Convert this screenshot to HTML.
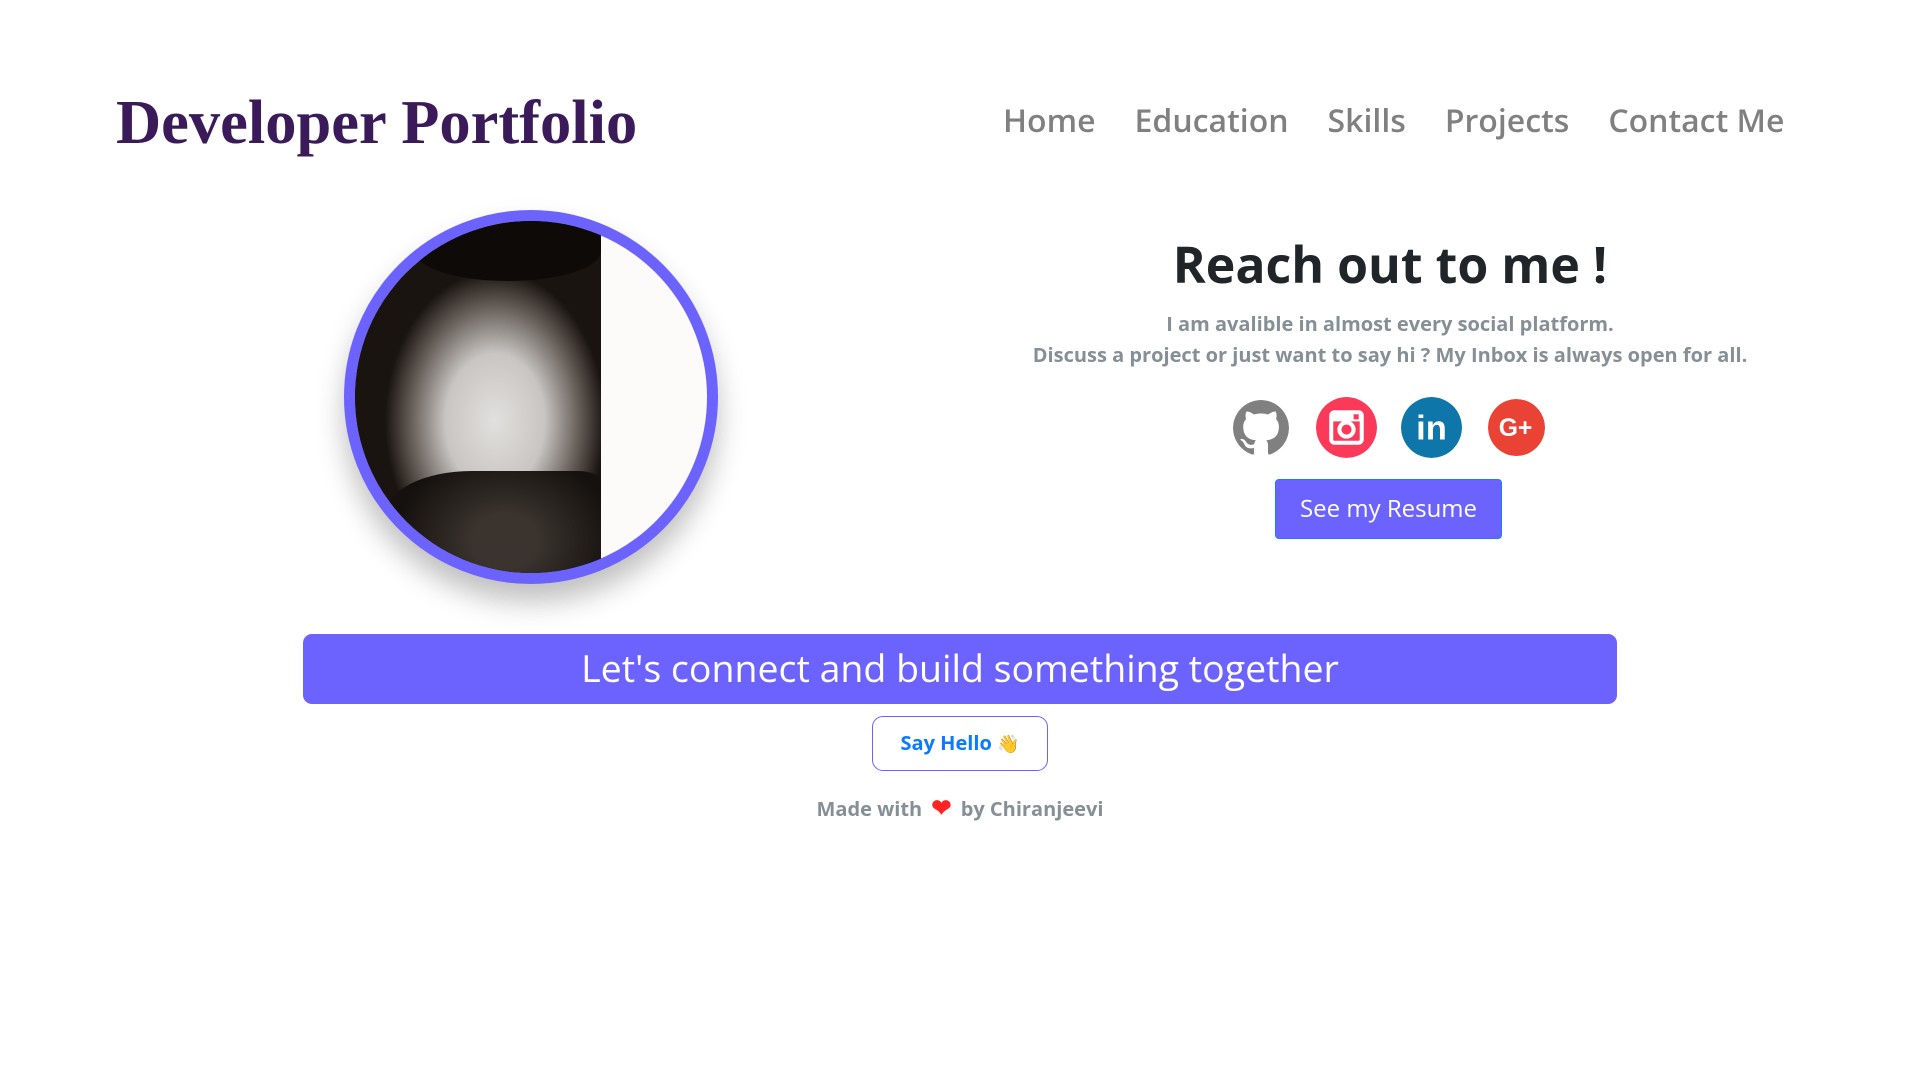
<!DOCTYPE html>
<html><head><meta charset="utf-8"><style>
*{margin:0;padding:0;box-sizing:border-box}
body{width:1920px;height:1080px;background:#fff;font-family:"Open Sans","Liberation Sans",sans-serif;position:relative;overflow:hidden}
.title{position:absolute;left:116px;top:86px;font-family:"Liberation Serif",serif;font-weight:bold;font-size:62.5px;color:#3b1a5a;white-space:nowrap}
.nav{position:absolute;top:99px;left:1003px;font-size:32px;font-weight:600;color:#808080;white-space:nowrap}
.nav span{margin-right:39px}
.avatar{position:absolute;left:344px;top:210px;width:374px;height:374px;border-radius:50%;border:11px solid #6c63ff;box-shadow:0 18px 28px rgba(0,0,0,.25);overflow:hidden;background:#fcfbfa}
.face{position:absolute;left:0;top:0;width:246px;height:100%;background:radial-gradient(ellipse 110px 150px at 140px 200px,#e2e0de 0%,#c8c5c2 45%,#6a625d 75%,#1a1410 100%),#1a1410}
.hair{position:absolute;left:60px;top:0;width:186px;height:60px;background:#0d0a08;border-radius:40% 20% 50% 50%}
.beard{position:absolute;left:30px;top:250px;width:216px;height:110px;background:radial-gradient(ellipse 110px 90px at 120px 70px,#3a332e 30%,#15110e 100%);border-radius:40% 10% 0 0}
.h1{position:absolute;left:1090px;width:600px;top:230px;text-align:center;font-size:50px;font-weight:bold;color:#212529}
.p{position:absolute;left:940px;width:900px;top:308px;text-align:center;font-size:20px;font-weight:bold;color:#868e96;line-height:31px}
.ic{position:absolute;top:398px;width:59px;height:59px;border-radius:50%}
.btn{position:absolute;left:1275px;top:479px;width:227px;height:60px;background:#6c63ff;border:1px solid #1e7bff;border-radius:4px;color:#fff;font-size:24px;text-align:center;line-height:58px}
.banner{position:absolute;left:303px;top:634px;width:1314px;height:70px;background:#6c63ff;border-radius:9px;color:#fff;font-size:37.5px;text-align:center;line-height:68px}
.hello{position:absolute;left:872px;top:716px;width:176px;height:55px;border:1.5px solid #6c63ff;border-radius:11px;color:#0a7bff;font-size:20px;font-weight:bold;text-align:center;line-height:52px}
.made{position:absolute;left:0;width:1920px;top:791px;text-align:center;font-size:20px;font-weight:bold;color:#868e96}
</style></head><body>
<div class="title">Developer Portfolio</div>
<div class="nav"><span>Home</span><span>Education</span><span>Skills</span><span>Projects</span><span style="margin:0">Contact Me</span></div>
<div class="avatar"><div class="face"></div><div class="beard"></div><div class="hair"></div></div>
<div class="h1">Reach out to me !</div>
<div class="p">I am avalible in almost every social platform.<br>Discuss a project or just want to say hi ? My Inbox is always open for all.</div>
<svg class="ic" style="left:1233px;top:400px;width:56px;height:56px" viewBox="0 0 16 16"><path fill="#808080" d="M8 0C3.58 0 0 3.58 0 8c0 3.54 2.290 6.53 5.47 7.59.4.07.55-.17.55-.38 0-.19-.01-.82-.01-1.49-2.01.37-2.530-.49-2.69-.94-.09-.23-.48-.94-.82-1.130-.28-.15-.68-.52-.01-.53.63-.01 1.08.58 1.23.82.72 1.21 1.870.87 2.33.66.07-.52.28-.87.51-1.07-1.78-.2-3.64-.89-3.64-3.95 0-.87.31-1.59.82-2.15-.08-.2-.36-1.02.08-2.12 0 0 .67-.21 2.2.82.64-.18 1.32-.27 2-.27.68 0 1.36.09 2 .27 1.53-1.04 2.2-.82 2.2-.82.44 1.1.16 1.92.08 2.12.51.56.82 1.27.82 2.15 0 3.07-1.87 3.75-3.65 3.95.29.25.54.73.54 1.48 0 1.07-.01 1.93-.01 2.2 0 .21.15.46.55.38A8.013 8.013 0 0016 8c0-4.42-3.58-8-8-8z"/></svg>
<svg class="ic" style="left:1316px;top:397px;width:61px;height:61px" viewBox="0 0 60 60"><circle cx="30" cy="30" r="30" fill="#fb3958"/><rect x="15" y="15" width="30" height="30" rx="3" fill="none" stroke="#fff" stroke-width="4"/><rect x="15" y="15" width="30" height="9" fill="#fff"/><circle cx="30" cy="32" r="7" fill="#fb3958" stroke="#fff" stroke-width="4"/><rect x="37" y="17" width="5" height="5" fill="#fb3958"/></svg>
<svg class="ic" style="left:1401px;top:397px;width:61px;height:61px" viewBox="0 0 60 60"><circle cx="30" cy="30" r="30" fill="#0e76a8"/><text x="30" y="42" text-anchor="middle" font-family="Liberation Sans,sans-serif" font-weight="bold" font-size="34" fill="#fff">in</text></svg>
<svg class="ic" style="left:1488px;top:399px;width:57px;height:57px" viewBox="0 0 60 60"><circle cx="30" cy="30" r="30" fill="#ea4335"/><text x="29" y="39" text-anchor="middle" font-family="Liberation Sans,sans-serif" font-weight="bold" font-size="26" fill="#fff">G+</text></svg>
<div class="btn">See my Resume</div>
<div class="banner">Let's connect and build something together</div>
<div class="hello">Say Hello <span style="font-size:18px">👋</span></div>
<div class="made">Made with <span style="color:#f22;font-size:24px;margin:0 4px">❤</span> by Chiranjeevi</div>
</body></html>
